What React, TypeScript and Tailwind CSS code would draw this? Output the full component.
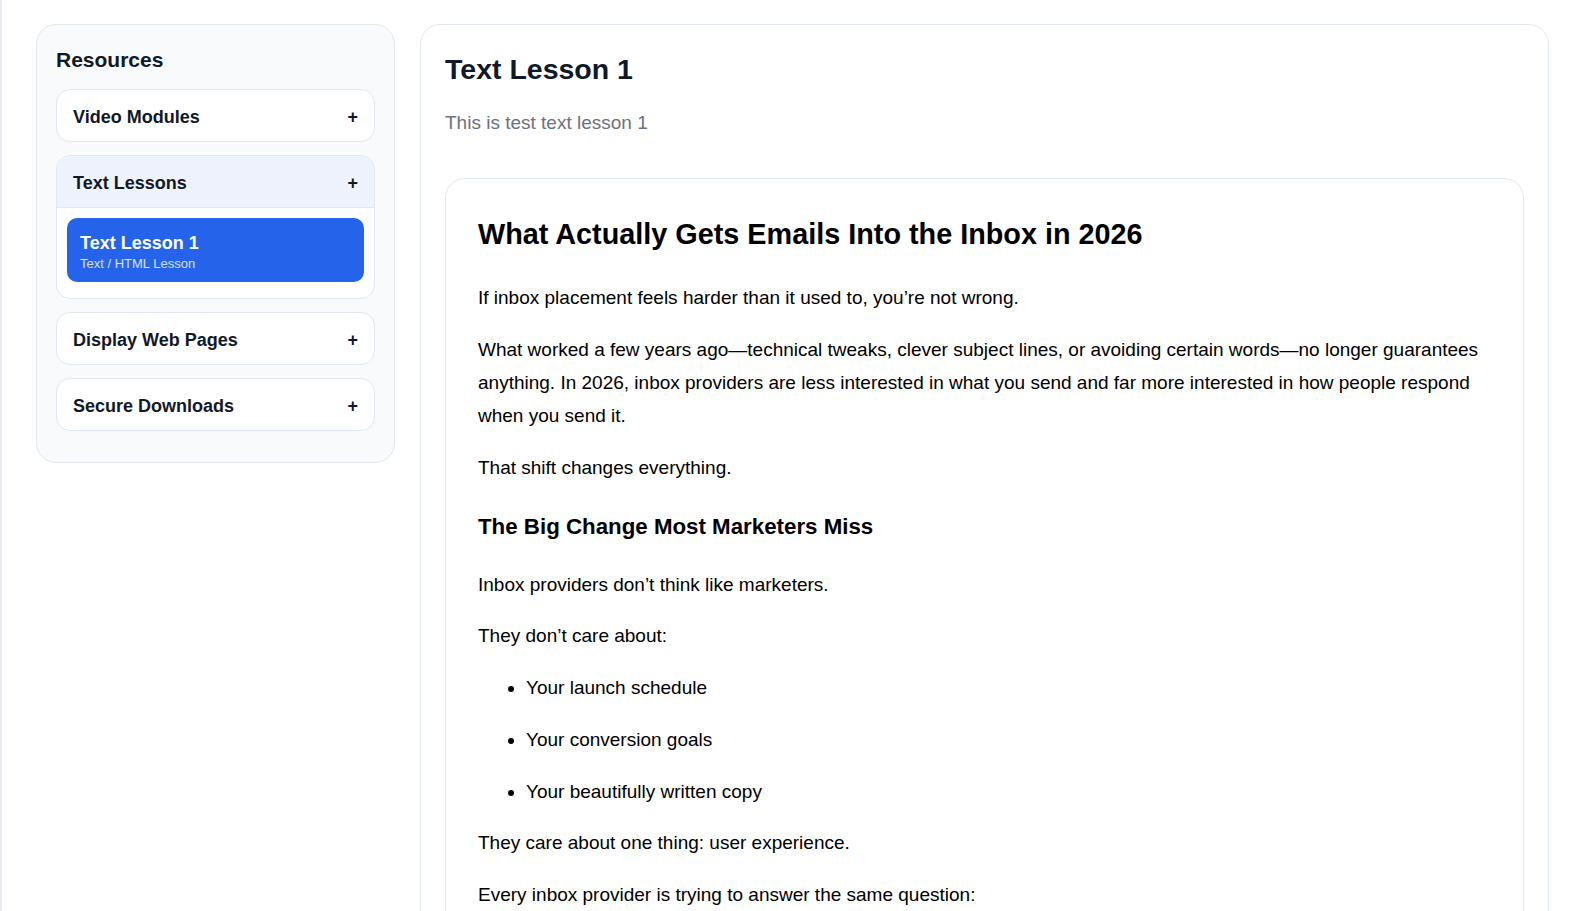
import { useState } from "react";

interface Lesson {
  title: string;
  kind: string;
}

interface Section {
  id: string;
  label: string;
  lessons: Lesson[];
}

const sections: Section[] = [
  { id: "video", label: "Video Modules", lessons: [] },
  {
    id: "text",
    label: "Text Lessons",
    lessons: [{ title: "Text Lesson 1", kind: "Text / HTML Lesson" }],
  },
  { id: "pages", label: "Display Web Pages", lessons: [] },
  { id: "downloads", label: "Secure Downloads", lessons: [] },
];

const Sidebar = () => {
  const [open, setOpen] = useState<string | null>("text");
  const [active, setActive] = useState("Text Lesson 1");

  return (
    <aside className="w-[359px] shrink-0 self-start rounded-[20px] border border-[#e2e8f0] bg-[#f8fafc] p-[19px] pb-[31px]">
      <h2 className="mb-[13px] text-[21px] font-bold leading-[32px] text-[#111827]">
        Resources
      </h2>
      <div className="flex flex-col gap-[13px]">
        {sections.map((s) => {
          const isOpen = open === s.id;
          return (
            <div
              key={s.id}
              className="overflow-hidden rounded-[14px] border border-[#e2e8f0] bg-white"
            >
              <button
                onClick={() => setOpen(isOpen ? null : s.id)}
                className={`flex w-full items-center justify-between px-4 pt-[15px] pb-[11px] text-left text-[18px] font-bold leading-[25px] text-[#111827] ${
                  isOpen ? "border-b border-[#e2e8f0] bg-[#eef2fd]" : ""
                }`}
              >
                <span>{s.label}</span>
                <span className="text-[18px] font-bold">+</span>
              </button>
              {isOpen && (
                <div className="px-[10px] pt-[10px] pb-[16px]">
                  {s.lessons.map((l) => (
                    <button
                      key={l.title}
                      onClick={() => setActive(l.title)}
                      className={`block w-full rounded-[10px] px-[13px] pt-[15px] pb-[11px] text-left ${
                        active === l.title
                          ? "bg-[#2563eb] text-white"
                          : "bg-white text-[#111827]"
                      }`}
                    >
                      <div className="text-[18px] font-bold leading-[20px]">
                        {l.title}
                      </div>
                      <div className="mt-[3px] text-[13px] leading-[15px] text-white/80">
                        {l.kind}
                      </div>
                    </button>
                  ))}
                </div>
              )}
            </div>
          );
        })}
      </div>
    </aside>
  );
};

const Article = () => (
  <div className="mt-[41px] rounded-[20px] border border-[#e2e8f0] bg-white p-8 text-black">
    <h2 className="mb-6 text-[28.8px] font-bold leading-[46px]">
      What Actually Gets Emails Into the Inbox in 2026
    </h2>
    <div className="text-[19px] leading-[33px] [&_li]:mb-[18.75px] [&_p]:mb-[18.75px]">
      <p>If inbox placement feels harder than it used to, you’re not wrong.</p>
      <p>
        What worked a few years ago—technical tweaks, clever subject lines, or
        avoiding certain words—no longer guarantees anything. In 2026, inbox
        providers are less interested in what you send and far more interested
        in how people respond when you send it.
      </p>
      <p>That shift changes everything.</p>
      <h3 className="mt-[26px] mb-[25px] text-[22.3px] font-bold leading-[33px]">
        The Big Change Most Marketers Miss
      </h3>
      <p>Inbox providers don’t think like marketers.</p>
      <p>They don’t care about:</p>
      <ul className="list-disc pl-[48px]">
        <li>Your launch schedule</li>
        <li>Your conversion goals</li>
        <li>Your beautifully written copy</li>
      </ul>
      <p>They care about one thing: user experience.</p>
      <p>Every inbox provider is trying to answer the same question:</p>
      <p className="font-bold">“Do people actually want this email?”</p>
      <p>
        Every open, reply, delete and spam complaint is a vote. The more your
        subscribers engage, the more the inbox trusts you.
      </p>
    </div>
  </div>
);

export default function App() {
  return (
    <div className="flex min-h-screen gap-[25px] border-l-2 border-[#e5e9f0] bg-white pt-6 pr-[35px] pl-[34px] font-['Liberation_Sans',Arial,sans-serif]">
      <Sidebar />
      <main className="min-w-0 flex-1 rounded-[20px] border border-[#e2e8f0] bg-white p-6">
        <h1 className="text-[28.5px] font-bold leading-[40px] text-[#111827]">
          Text Lesson 1
        </h1>
        <p className="mt-[20px] text-[19px] leading-[28px] text-[#6b7280]">
          This is test text lesson 1
        </p>
        <Article />
      </main>
    </div>
  );
}
